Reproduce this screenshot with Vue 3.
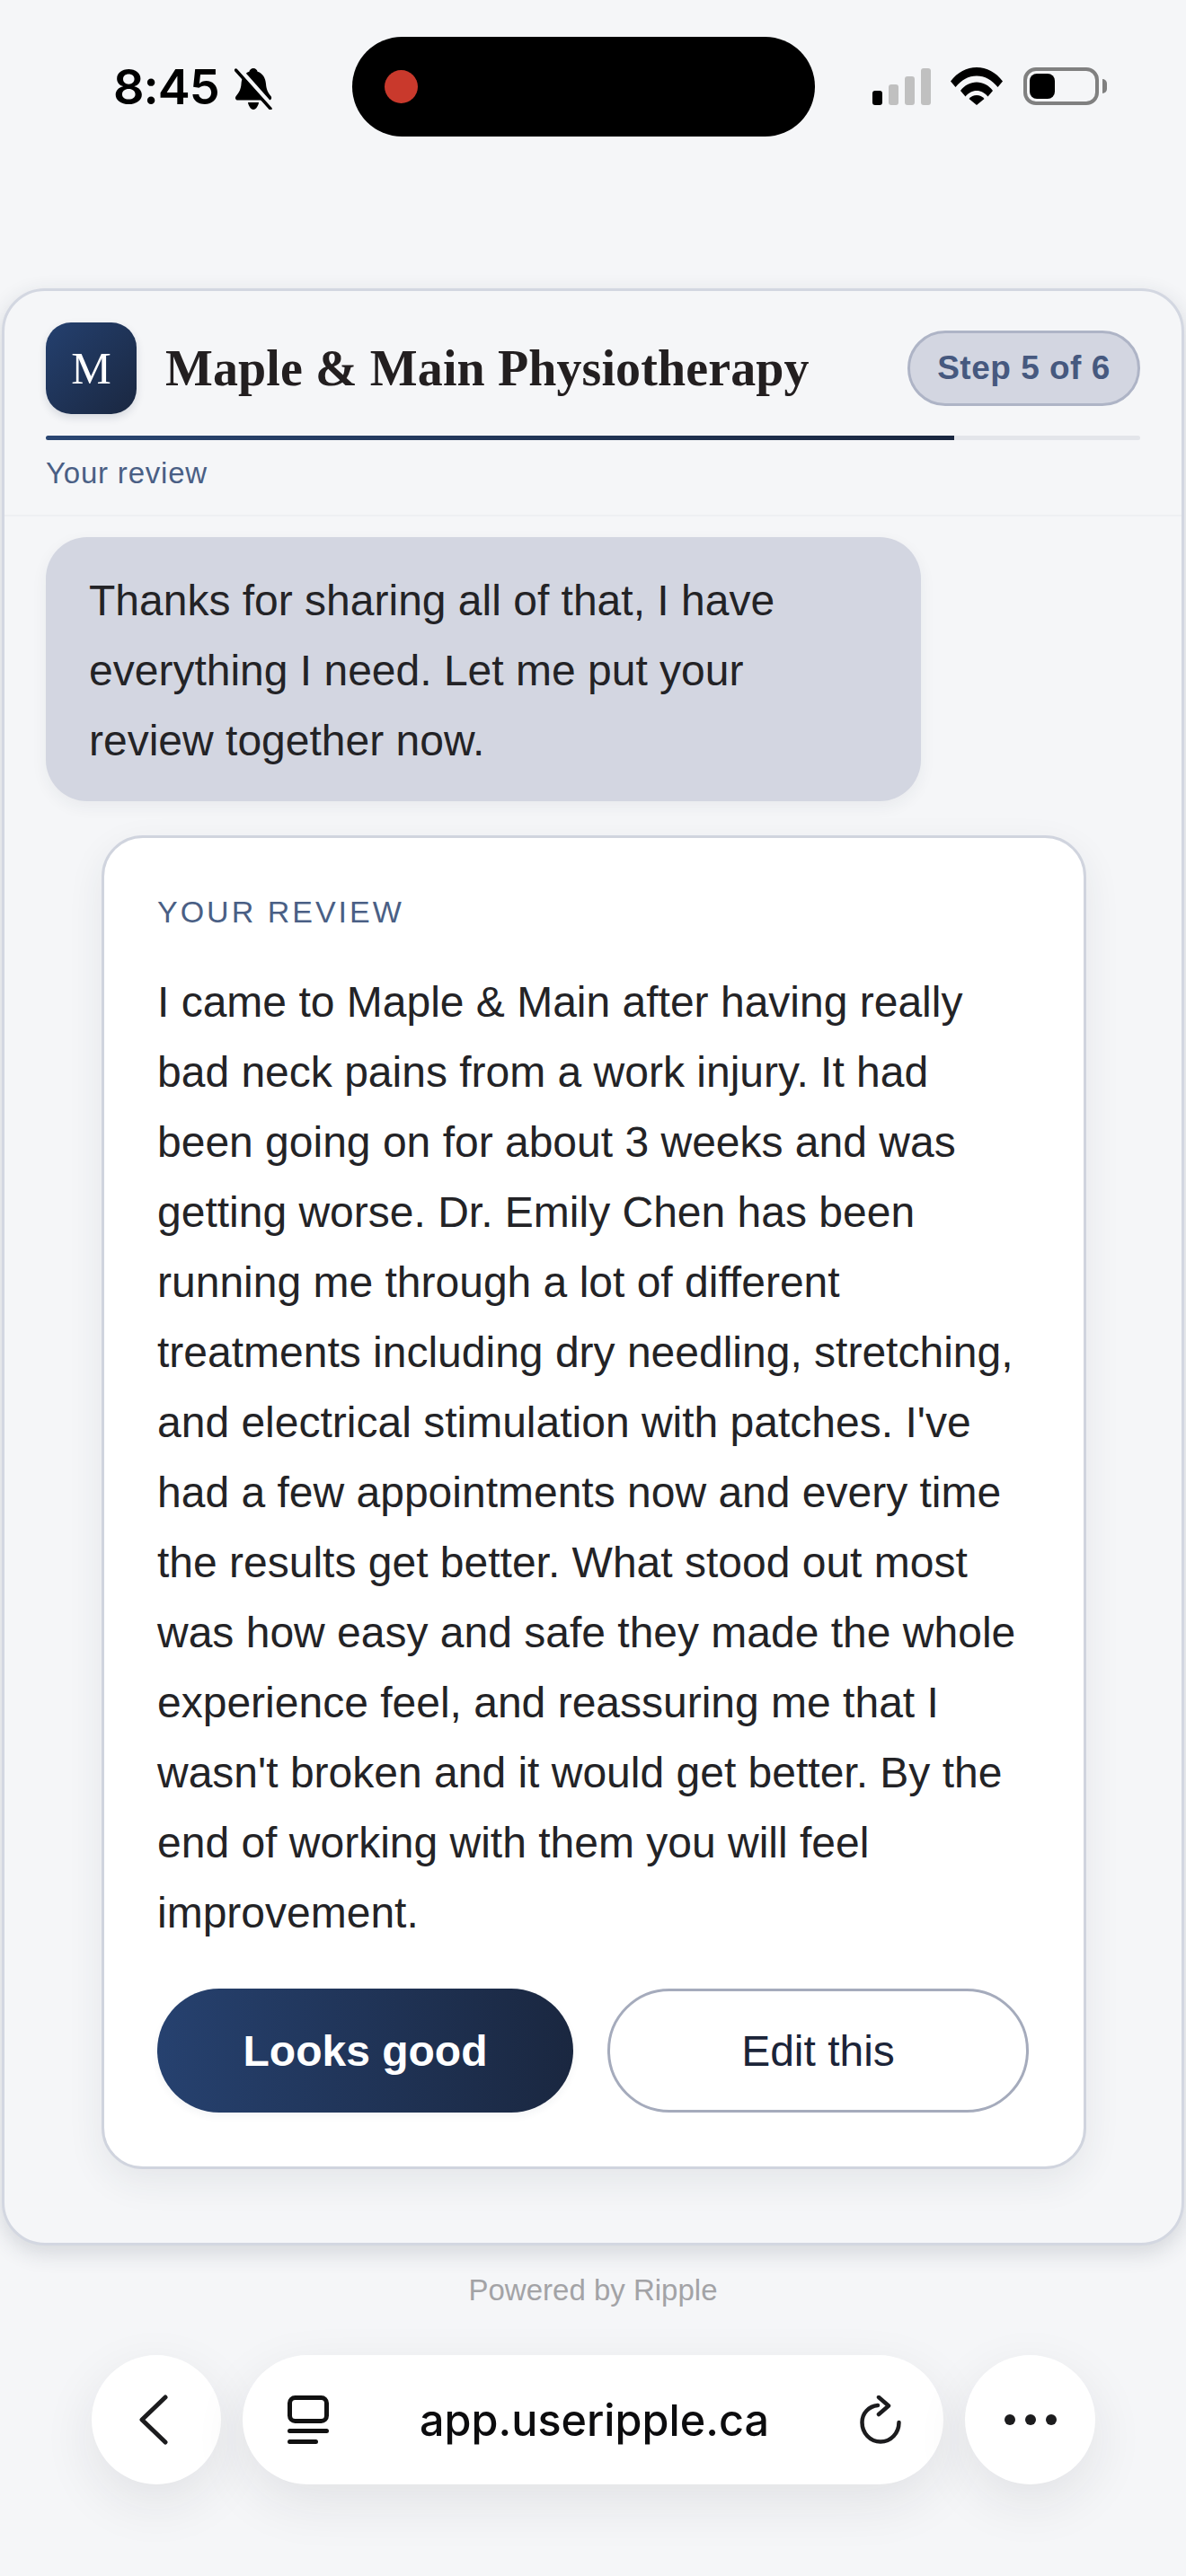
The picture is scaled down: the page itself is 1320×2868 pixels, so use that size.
<script setup>
const reviewText = "I came to Maple & Main after having really bad neck pains from a work injury. It had been going on for about 3 weeks and was getting worse. Dr. Emily Chen has been running me through a lot of different treatments including dry needling, stretching, and electrical stimulation with patches. I've had a few appointments now and every time the results get better. What stood out most was how easy and safe they made the whole experience feel, and reassuring me that I wasn't broken and it would get better. By the end of working with them you will feel improvement.";
</script>

<template>
  <div class="page">
    <div class="status-bar">
      <div class="status-left">
        <span class="time">8:45</span>
        <svg class="bell" viewBox="0 0 42 46" width="42" height="46">
          <path d="M21 0c2.400 0 4.200 1.800 4.600 3.800C31.500 5.600 34.500 11 35 17.500c.5 6 2 9.500 5.500 13.500 1.400 1.700.5 4.500-1.800 4.500H3.500c-2.400 0-3.200-2.800-1.800-4.500C5.200 27 7 23.500 7.500 17.500 8 11 11 5.600 16.400 3.800 16.800 1.800 18.600 0 21 0z" fill="#000" />
          <path d="M15 38h12c-.4 3.600-3 8-6 8s-5.600-4.400-6-8z" fill="#000" />
          <path d="M3 -1l39 44" stroke="#f5f6f8" stroke-width="6" />
          <path d="M1.500 2L40 45" stroke="#000" stroke-width="3.400" stroke-linecap="round" />
        </svg>
      </div>
      <div class="island"><span class="rec-dot"></span></div>
      <div class="status-right">
        <div class="signal">
          <span class="bar bar-on"></span>
          <span class="bar bar-2"></span>
          <span class="bar bar-3"></span>
          <span class="bar bar-4"></span>
        </div>
        <svg class="wifi" viewBox="0 0 58 42" width="58" height="42">
          <path d="M0 15.500C7.500 5.500 18 0 29 0s21.500 5.500 29 15.500l-5.500 6.500C46 14 38 9.500 29 9.500S12 14 5.500 22z" fill="#000" />
          <path d="M11 26c4.500-6 11-9.500 18-9.500S42.500 20 47 26l-5.500 6.500C38 28.500 34 26 29 26s-9 2.500-12.500 6.500z" fill="#000" />
          <path d="M20.500 35c2.200-2.500 5.200-4 8.500-4s6.300 1.500 8.500 4L29 42z" fill="#000" />
        </svg>
        <div class="battery">
          <div class="battery-body"><span class="battery-fill"></span></div>
          <span class="battery-cap"></span>
        </div>
      </div>
    </div>

    <div class="card">
      <header class="card-header">
        <div class="brand-row">
          <div class="logo">M</div>
          <h1 class="brand-name">Maple &amp; Main Physiotherapy</h1>
          <div class="step-pill">Step 5 of 6</div>
        </div>
        <div class="progress"><div class="progress-fill"></div></div>
        <div class="step-label">Your review</div>
      </header>

      <div class="chat">
        <div class="bubble">Thanks for sharing all of that, I have everything I need. Let me put your review together now.</div>
        <div class="review">
          <div class="review-label">YOUR REVIEW</div>
          <p class="review-text">{{ reviewText }}</p>
          <div class="actions">
            <button class="btn btn-primary">Looks good</button>
            <button class="btn btn-secondary">Edit this</button>
          </div>
        </div>
      </div>
    </div>

    <div class="powered">Powered by Ripple</div>

    <div class="browser-bar">
      <div class="round-btn back-btn">
        <svg viewBox="0 0 34 56" width="34" height="56">
          <path d="M30 3L4 28l26 25" fill="none" stroke="#1c1c1e" stroke-width="5" stroke-linecap="round" stroke-linejoin="round" />
        </svg>
      </div>
      <div class="url-pill">
        <svg class="tabs-icon" viewBox="0 0 46 54" width="46" height="54">
          <rect x="2.500" y="2.500" width="41" height="26" rx="6" fill="none" stroke="#111" stroke-width="5" />
          <path d="M2.500 39.500h41M2.500 51.500h29" fill="none" stroke="#111" stroke-width="5" stroke-linecap="round" />
        </svg>
        <span class="url">app.useripple.ca</span>
        <svg class="reload-icon" viewBox="0 0 46 54" width="46" height="54">
          <path d="M20 11C10 12 2.500 19.500 2.500 30c0 12 9 21.500 20.500 21.500S43.500 42 43.500 30" fill="none" stroke="#1c1c1e" stroke-width="4.500" stroke-linecap="round" />
          <path d="M21 2l11 9.500L21 21" fill="none" stroke="#1c1c1e" stroke-width="4.500" stroke-linecap="round" stroke-linejoin="round" />
        </svg>
      </div>
      <div class="round-btn more-btn">
        <span class="dot"></span><span class="dot"></span><span class="dot"></span>
      </div>
    </div>
  </div>
</template>

<style>
html, body {
  background: #f5f6f8;
}
</style>

<style scoped>
.page {
  width: 1320px;
  height: 2868px;
  overflow: hidden;
  background: #f5f6f8;
  font-family: "Liberation Sans", Arial, sans-serif;
}

/* status bar */
.status-bar {
  display: flex;
  align-items: flex-start;
  height: 321px;
  padding-top: 41px;
  box-sizing: border-box;
}

.status-left {
  display: flex;
  align-items: center;
  gap: 17px;
  width: 392px;
  height: 111px;
  padding-left: 126px;
  box-sizing: border-box;
}

.time {
  font-family: Inter, sans-serif;
  font-size: 54px;
  font-weight: 600;
  line-height: 56px;
  color: #000;
  letter-spacing: -1px;
}

.bell {
  margin-top: 4px;
}

.island {
  display: flex;
  align-items: center;
  width: 515px;
  height: 111px;
  border-radius: 56px;
  background: #000;
  padding-left: 36px;
  box-sizing: border-box;
}

.rec-dot {
  width: 37px;
  height: 37px;
  border-radius: 50%;
  background: #c9392c;
}

.status-right {
  display: flex;
  align-items: flex-end;
  height: 42px;
  margin-top: 34px;
  margin-left: 64px;
}

.signal {
  display: flex;
  align-items: flex-end;
  gap: 7px;
  height: 41px;
}

.bar {
  width: 11px;
  border-radius: 3px;
  background: #c0c0c0;
}

.bar-on {
  height: 16px;
  background: #000;
}

.bar-2 { height: 23px; }
.bar-3 { height: 32px; }
.bar-4 { height: 41px; }

.wifi {
  margin-left: 22px;
}

.battery {
  display: flex;
  align-items: center;
  margin-left: 23px;
}

.battery-body {
  width: 84px;
  height: 42px;
  border: 4px solid #808080;
  border-radius: 14px;
  box-sizing: border-box;
  padding: 3px;
}

.battery-fill {
  display: block;
  width: 28px;
  height: 28px;
  border-radius: 8px;
  background: #000;
}

.battery-cap {
  width: 5px;
  height: 16px;
  margin-left: 4px;
  border-radius: 0 5px 5px 0;
  background: #808080;
}

/* main card */
.card {
  margin: 0 2px;
  height: 2179px;
  box-sizing: border-box;
  border: 3px solid #d3d7e1;
  border-radius: 48px;
  background: #f5f6f8;
  box-shadow: 0 8px 24px rgba(40, 50, 70, 0.16);
}

.card-header {
  height: 251px;
  box-sizing: border-box;
  padding: 35px 46px 0;
  border-bottom: 2px solid #eef0f3;
}

.brand-row {
  display: flex;
  align-items: center;
  height: 102px;
}

.logo {
  display: flex;
  align-items: center;
  justify-content: center;
  width: 101px;
  height: 102px;
  flex-shrink: 0;
  border-radius: 28px;
  background: linear-gradient(135deg, #24406f, #1a2740);
  box-shadow: 0 4px 10px rgba(30, 40, 70, 0.14);
  font-family: "Liberation Serif", "Times New Roman", serif;
  font-size: 50px;
  color: #fff;
}

.brand-name {
  margin: 0 0 0 32px;
  font-family: "Liberation Serif", "Times New Roman", serif;
  font-size: 56px;
  font-weight: 700;
  line-height: 64px;
  letter-spacing: 0.1px;
  color: #231f20;
  white-space: nowrap;
}

.step-pill {
  display: flex;
  align-items: center;
  justify-content: center;
  width: 259px;
  height: 84px;
  margin-left: auto;
  box-sizing: border-box;
  border: 3px solid #aeb4c6;
  border-radius: 42px;
  background: #d3d6e1;
  font-size: 37px;
  font-weight: 700;
  letter-spacing: 0.5px;
  color: #46597f;
  white-space: nowrap;
}

.progress {
  height: 5px;
  margin-top: 24px;
  background: #e3e5ea;
  border-radius: 3px;
}

.progress-fill {
  width: 1011px;
  height: 5px;
  border-radius: 3px 0 0 3px;
  background: linear-gradient(90deg, #2a4672, #1a2740);
}

.step-label {
  margin-top: 18px;
  font-size: 33px;
  line-height: 38px;
  letter-spacing: 0.8px;
  color: #4a5f85;
}

.chat {
  padding: 23px 46px 0;
}

.bubble {
  width: 974px;
  box-sizing: border-box;
  padding: 32px 48px 28px;
  border-radius: 46px;
  background: #d3d6e1;
  box-shadow: 0 6px 18px rgba(40, 50, 70, 0.06);
  font-size: 48px;
  line-height: 78px;
  color: #232326;
}

.review {
  width: 1096px;
  margin: 38px 0 0 62px;
  box-sizing: border-box;
  padding: 60px 61px 60px 59px;
  border: 3px solid #d0d4de;
  border-radius: 46px;
  background: #fff;
  box-shadow: 0 14px 40px rgba(40, 50, 70, 0.08);
}

.review-label {
  font-size: 34px;
  line-height: 44px;
  letter-spacing: 3px;
  color: #4a5f85;
}

.review-text {
  margin: 40px 0 0;
  font-size: 48px;
  line-height: 78px;
  color: #232326;
}

.actions {
  display: flex;
  gap: 38px;
  margin-top: 45px;
}

.btn {
  height: 138px;
  border-radius: 69px;
  box-sizing: border-box;
  font-family: "Liberation Sans", Arial, sans-serif;
  font-size: 48px;
}

.btn-primary {
  width: 463px;
  border: none;
  background: linear-gradient(90deg, #26416f, #1a2740);
  box-shadow: 0 4px 8px rgba(40, 50, 70, 0.05);
  color: #fff;
  font-weight: 700;
}

.btn-secondary {
  width: 469px;
  border: 3px solid #a5abbc;
  background: #fff;
  color: #1b2438;
}

.powered {
  margin-top: 31px;
  font-size: 33px;
  line-height: 38px;
  text-align: center;
  color: #a3a3a6;
}

/* browser bar */
.browser-bar {
  display: flex;
  gap: 24px;
  height: 144px;
  margin-top: 53px;
  padding-left: 102px;
}

.round-btn,
.url-pill {
  display: flex;
  align-items: center;
  height: 144px;
  background: #fff;
  box-shadow: 0 20px 60px rgba(30, 30, 40, 0.09);
}

.round-btn {
  justify-content: center;
  width: 144px;
  border-radius: 50%;
}

.back-btn svg {
  margin-left: -6px;
}

.more-btn {
  gap: 11px;
  width: 145px;
}

.dot {
  width: 12px;
  height: 12px;
  border-radius: 50%;
  background: #1c1c1e;
}

.url-pill {
  width: 780px;
  border-radius: 72px;
  padding: 0 47px 0 50px;
  box-sizing: border-box;
}

.url {
  flex: 1;
  font-family: Inter, sans-serif;
  font-size: 48.500px;
  font-weight: 500;
  text-align: center;
  color: #0c0c0e;
  white-space: nowrap;
}
</style>
